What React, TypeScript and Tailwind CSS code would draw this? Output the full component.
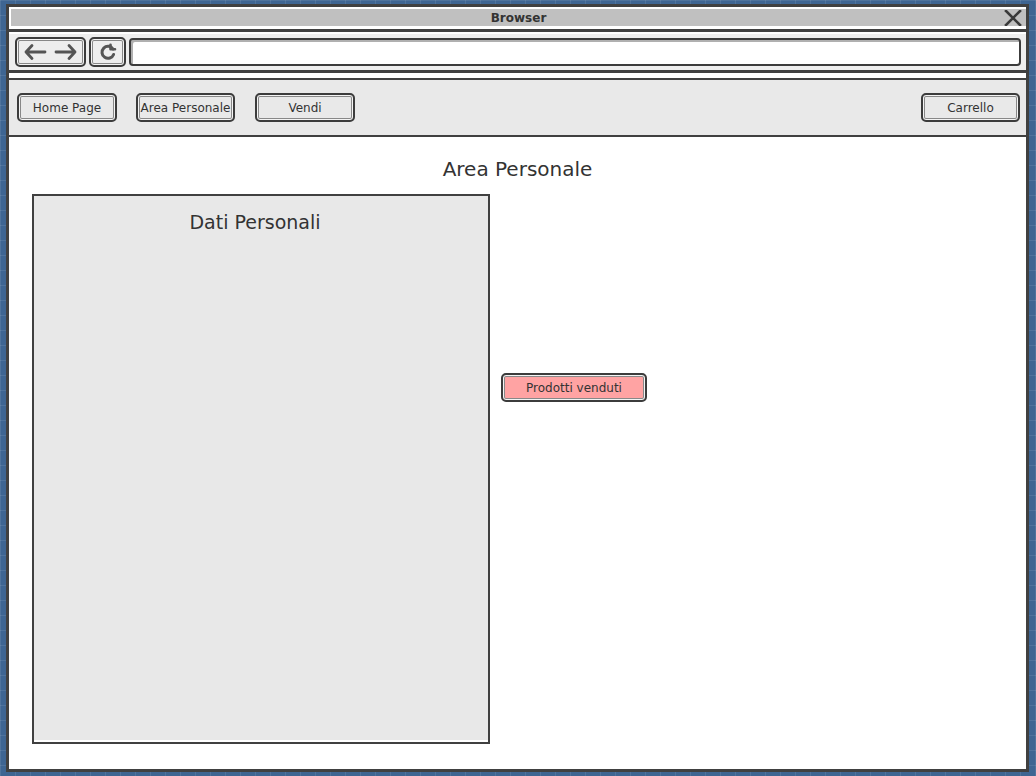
const font = "font-['Comic_Sans_MS','DejaVu_Sans',sans-serif]";

function SketchButton({ label, className = "" }: { label: string; className?: string }) {
  return (
    <div
      className={`h-[29px] flex items-center justify-center rounded-[5px] border-2 border-[#3c3c3c] shadow-[inset_0_0_0_1px_#f4f4f4,inset_0_0_0_2px_#888] text-[12px] text-[#333] ${className}`}
    >
      {label}
    </div>
  );
}

export default function App() {
  return (
    <div
      className={`w-[1036px] h-[776px] pt-[4px] pl-[6px] bg-[#3e6592] bg-[linear-gradient(rgba(255,255,255,0.09)_1px,transparent_1px),linear-gradient(90deg,rgba(255,255,255,0.09)_1px,transparent_1px)] bg-[size:15px_15px] ${font}`}
    >
      <div className="w-[1023px] h-[768px] border-[3px] border-[#404040] bg-white flex flex-col">
        {/* title bar */}
        <div className="h-[22px] pt-[2px] pl-[2px]">
          <div className="h-[17px] bg-[#c0c0c0] relative flex items-center justify-center text-[12px] font-bold text-[#333] font-['DejaVu_Sans',sans-serif]">
            Browser
            <svg className="absolute right-[4px] top-[1px]" width="18" height="16" viewBox="0 0 18 16" aria-hidden="true">
              <path d="M2 1l14 14M16 1L2 15" stroke="#3a3a3a" strokeWidth="2.6" strokeLinecap="square" />
            </svg>
          </div>
        </div>
        <div className="h-[3px] bg-[#404040]" />

        {/* toolbar */}
        <div className="h-[38px] bg-[#eeeeee] border-t-2 border-white flex items-center gap-[3px] pl-[6px] pr-[5px]">
          <div className="w-[71px] h-[30px] rounded-[5px] border-2 border-[#3c3c3c] shadow-[inset_0_0_0_1px_#f4f4f4,inset_0_0_0_2px_#888] flex items-center justify-around px-[3px]">
            <svg width="24" height="18" viewBox="0 0 24 18" aria-hidden="true">
              <path d="M22 9H3M9 2.5L3 9l6 6.5" fill="none" stroke="#555" strokeWidth="2.8" strokeLinecap="round" strokeLinejoin="round" />
            </svg>
            <svg width="24" height="18" viewBox="0 0 24 18" aria-hidden="true">
              <path d="M2 9h19M15 2.5l6 6.5-6 6.5" fill="none" stroke="#555" strokeWidth="2.8" strokeLinecap="round" strokeLinejoin="round" />
            </svg>
          </div>
          <div className="w-[37px] h-[30px] rounded-[5px] border-2 border-[#3c3c3c] shadow-[inset_0_0_0_1px_#f4f4f4,inset_0_0_0_2px_#888] flex items-center justify-center">
            <svg width="18" height="18" viewBox="0 0 18 18" aria-hidden="true">
              <path d="M14 6A6 6 0 1 0 14.6 11.5" fill="none" stroke="#555" strokeWidth="3" strokeLinecap="round" />
              <path d="M11.5 1.8V6.3H16" fill="none" stroke="#555" strokeWidth="2.6" strokeLinecap="round" strokeLinejoin="round" />
            </svg>
          </div>
          <div className="flex-1 h-[28px] rounded-[4px] border-2 border-[#3c3c3c] bg-white shadow-[inset_2px_2px_0_#b0b0b0]" />
        </div>
        <div className="h-[3px] bg-[#404040]" />
        <div className="h-[5px] bg-white" />
        <div className="h-[2px] bg-[#404040]" />

        {/* nav */}
        <div className="h-[55px] bg-[#e9e9e9] flex items-center pl-[8px] pr-[6px]">
          <SketchButton label="Home Page" className="w-[100px]" />
          <SketchButton label="Area Personale" className="w-[99px] ml-[19px]" />
          <SketchButton label="Vendi" className="w-[100px] ml-[20px]" />
          <SketchButton label="Carrello" className="w-[99px] ml-auto" />
        </div>
        <div className="h-[2px] bg-[#404040]" />

        {/* content */}
        <div className="flex-1">
          <div className="h-[57px] pt-[20px] text-center text-[20px] leading-[24px] text-[#333]">Area Personale</div>
          <div className="flex items-start pl-[23px] gap-[11px]">
            <div className="w-[458px] h-[550px] border-2 border-[#404040] bg-[#e8e8e8] shadow-[inset_0_-2px_0_#fff] pt-[12px] pr-[12px] text-center text-[19px] leading-[28px] text-[#333]">
              Dati Personali
            </div>
            <SketchButton label="Prodotti venduti" className="w-[146px] mt-[179px] bg-[#ffa3a3]" />
          </div>
        </div>
      </div>
    </div>
  );
}
